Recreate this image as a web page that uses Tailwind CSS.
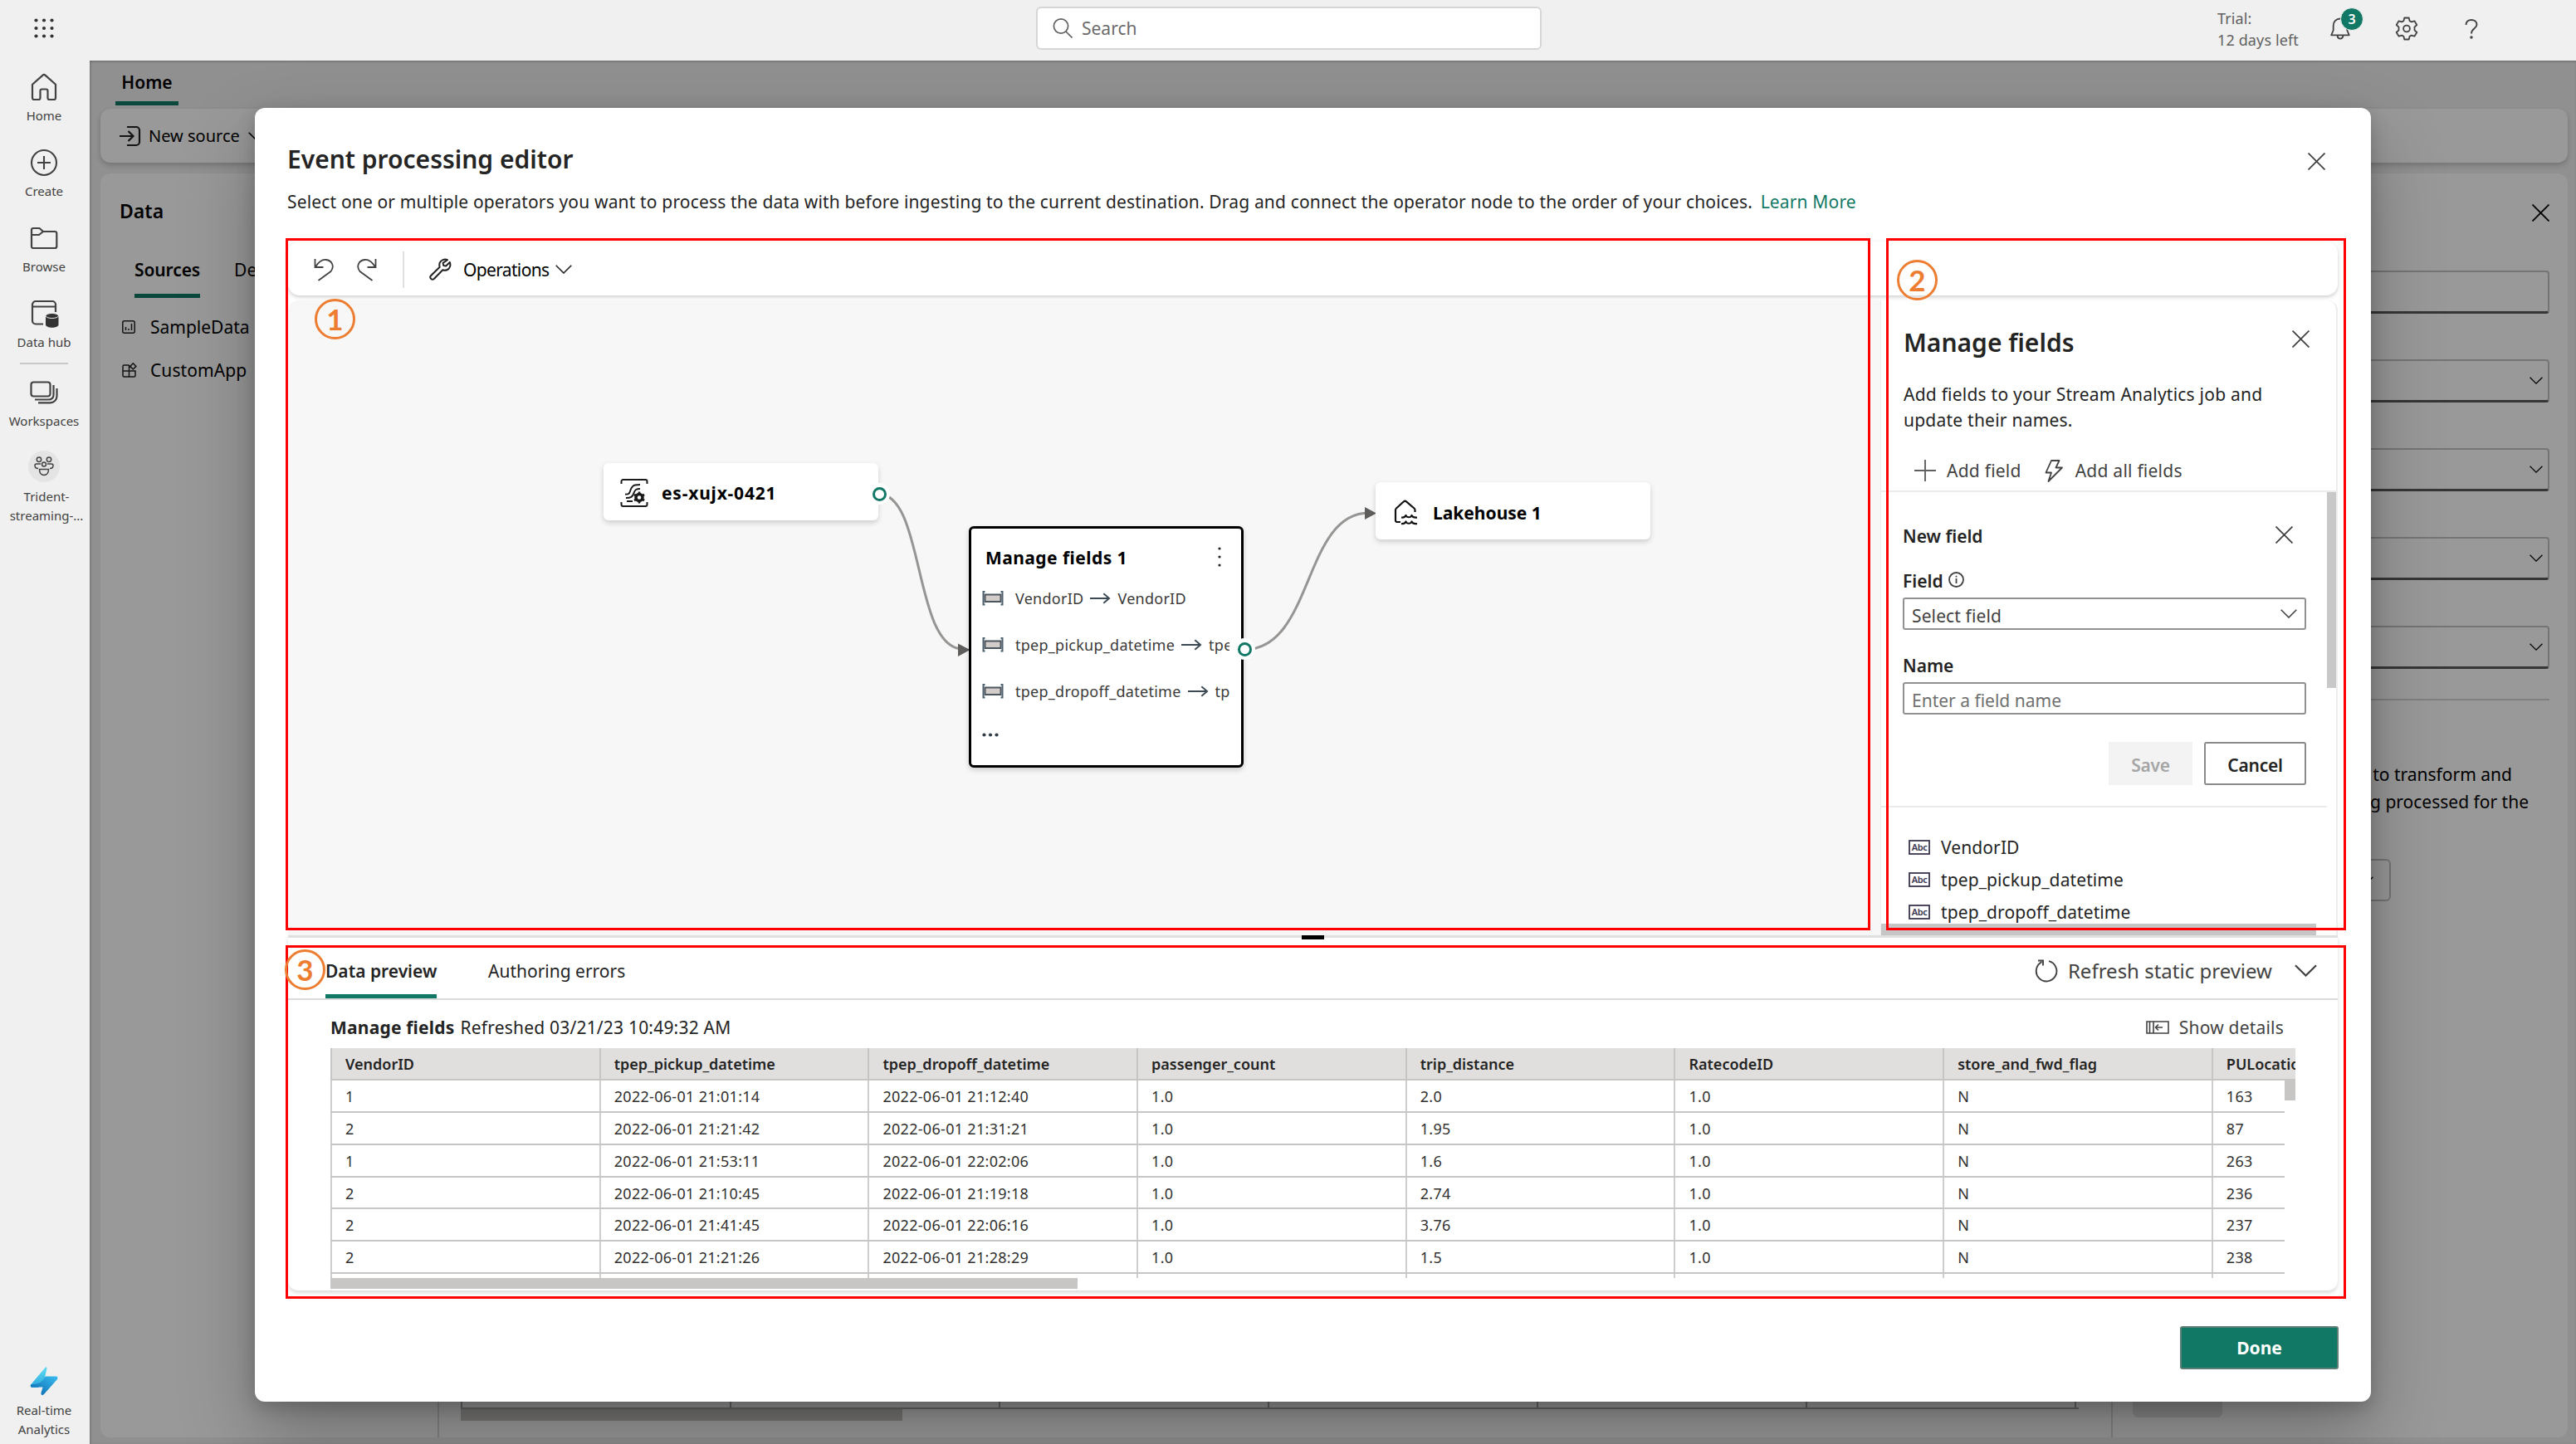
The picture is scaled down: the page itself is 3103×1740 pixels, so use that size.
<!DOCTYPE html>
<html lang="en">
<head>
    <meta charset="UTF-8">
    <meta name="viewport" content="width=device-width, initial-scale=1.0">
    <title>Event processing editor</title>
    <script src="https://cdn.jsdelivr.net/npm/@tailwindcss/browser@4"></script>
</head>
<body class="w-[3103px] h-[1740px] overflow-hidden flex flex-col bg-[#f0f0f0] font-['Noto_Sans','Open_Sans',sans-serif] text-[21px] leading-[30px] text-[#242424] whitespace-nowrap">
    <!-- Shared icons -->
    <svg class="hidden">
        <symbol id="x" viewBox="0 0 20 20"><path d="M.5.5l19 19M19.5.5l-19 19" fill="none" stroke="currentColor" stroke-width="1.7"/></symbol>
        <symbol id="chevron" viewBox="0 0 20 11"><path d="M.7.8L10 10 19.3.8" fill="none" stroke="currentColor" stroke-width="1.6"/></symbol>
        <symbol id="abc" viewBox="0 0 26 18"><rect x="1" y="1" width="24" height="16" fill="none" stroke="#3b3550" stroke-width="1.8"/><text x="13" y="13" text-anchor="middle" font-size="11" font-family="Noto Sans" font-weight="600" letter-spacing="-.4" fill="#3b3550">Abc</text></symbol>
        <symbol id="field" viewBox="0 0 26 18"><path d="M3.500 1H1.500v15.500h2M22.500 1h2v15.500h-2" fill="none" stroke="#4f6270" stroke-width="2"/><rect x="3.500" y="4.500" width="19" height="8.500" fill="#d2cdca" stroke="#4d565c" stroke-width="2"/></symbol>
        <symbol id="arrow" viewBox="0 0 26 14"><path d="M0 7h24M17 1l7 6-7 6" fill="none" stroke="#3b4a54" stroke-width="2"/></symbol>
    </svg>

    <!-- Top bar -->
    <header class="h-[73px] shrink-0 flex items-center relative">
        <svg class="ml-[41px] mb-[5px] w-6 h-6 fill-[#333]" viewBox="0 0 24 24">
            <circle cx="2.5" cy="2.5" r="2.1"/><circle cx="12" cy="2.5" r="2.1"/><circle cx="21.5" cy="2.5" r="2.1"/>
            <circle cx="2.5" cy="12" r="2.1"/><circle cx="12" cy="12" r="2.1"/><circle cx="21.5" cy="12" r="2.1"/>
            <circle cx="2.5" cy="21.5" r="2.1"/><circle cx="12" cy="21.5" r="2.1"/><circle cx="21.5" cy="21.5" r="2.1"/>
        </svg>
        <div class="ml-[1183px] mb-[5px] w-[609px] h-[52px] bg-white border-2 border-[#d6d6d6] rounded-md flex items-center pl-[18px] text-[#6b6b6b]">
            <svg class="w-6 h-6 mr-[11px]" viewBox="0 0 24 24" fill="none" stroke="#616161" stroke-width="1.7"><circle cx="10" cy="9.5" r="8.6"/><path d="M16 16l7.5 7.5"/></svg>
            Search
        </div>
        <div class="ml-[814px] mb-[3px] w-[120px] text-[18px] leading-[26px] tracking-[.13px] text-[#616161]">Trial:<br>12 days left</div>
        <div class="relative ml-[16px] mb-[5px] w-6 h-[27px]">
            <svg class="w-6 h-[27px]" viewBox="0 0 24 27" fill="none" stroke="#424242" stroke-width="1.8" stroke-linejoin="round"><path d="M12 1.500c-5 0-8.300 3.800-8.300 8.400v5.600L1.200 21.300h21.600l-2.500-5.800V9.900c0-4.600-3.300-8.400-8.300-8.400z"/><path d="M8.500 22c.4 2.300 1.700 3.600 3.500 3.600s3.100-1.300 3.500-3.600"/></svg>
            <div class="absolute left-[12px] -top-[12px] w-[28px] h-[28px] rounded-full bg-[#117865] border border-[#f0f0f0] text-white text-[16px] leading-[26px] font-semibold text-center">3</div>
        </div>
        <svg class="ml-[54px] mb-[4px] w-[28px] h-[29px]" viewBox="0 0 28 29" fill="none" stroke="#424242" stroke-width="1.8" stroke-linejoin="round"><path d="M11.300 1.500h5.400l.9 3.700 2.200 1.200 3.600-1.100 2.900 4.700-2.800 2.700v3.600l2.800 2.700-2.900 4.700-3.600-1.100-2.200 1.200-.9 3.700h-5.400l-.9-3.700-2.200-1.200-3.600 1.100-2.900-4.700 2.800-2.700v-3.600L1.700 10l2.900-4.700 3.600 1.100 2.200-1.200z"/><circle cx="14" cy="14.500" r="3.900"/></svg>
        <svg class="ml-[56px] mb-[4px] w-4 h-6" viewBox="0 0 16 24" fill="none" stroke="#424242" stroke-width="1.900"><path d="M1.500 7C1.500 3 4.200 1 8 1s6.500 2.200 6.500 5.700C14.500 11.500 8 11.300 8 17.500"/><circle cx="8" cy="22" r=".8"/></svg>
    </header>

    <div class="flex flex-1 min-h-0">
        <!-- Left navigation -->
        <nav class="w-[108px] shrink-0 flex flex-col items-center pr-[2px] text-[15px] leading-[23px] text-[#424242] text-center">
            <svg class="mt-[15px] w-8 h-[34px]" viewBox="0 0 32 34" fill="none" stroke="#424242" stroke-width="2.2" stroke-linejoin="round"><path d="M2 13.800L14.500 2.600a2.200 2.200 0 0 1 3 0L30 13.800V30a2 2 0 0 1-2 2h-5.500a2 2 0 0 1-2-2v-8.500a2 2 0 0 0-2-2h-5a2 2 0 0 0-2 2V30a2 2 0 0 1-2 2H4a2 2 0 0 1-2-2z"/></svg>
            <span class="mt-[6px]">Home</span>
            <svg class="mt-[28px] w-[34px] h-[34px]" viewBox="0 0 34 34" fill="none" stroke="#424242" stroke-width="2.100"><circle cx="17" cy="17" r="15"/><path d="M17 9v16M9 17h16"/></svg>
            <span class="mt-[6px]">Create</span>
            <svg class="mt-[31px] w-[34px] h-[28px]" viewBox="0 0 34 28" fill="none" stroke="#424242" stroke-width="2.200" stroke-linejoin="round"><path d="M2 4a2 2 0 0 1 2-2h7.500l4.500 4h14a2.300 2.300 0 0 1 2.300 2.300V24A2.300 2.300 0 0 1 30 26H4a2 2 0 0 1-2-2zM2 10h9l5-4"/></svg>
            <span class="mt-[9px]">Browse</span>
            <svg class="mt-[28px] ml-[3px] w-[35px] h-[35px]" viewBox="0 0 35 35" fill="none" stroke="#424242" stroke-width="2.200"><path d="M15 29.500H6a4 4 0 0 1-4-4V6a4 4 0 0 1 4-4h20a4 4 0 0 1 4 4v9M2 8.500h28"/><path d="M18 20v10c0 5 15.500 5 15.500 0V20z" fill="#333" stroke="none"/><ellipse cx="25.700" cy="19.500" rx="7.700" ry="3" fill="#333" stroke="#f0f0f0" stroke-width="1"/></svg>
            <span class="mt-[5px]">Data hub</span>
            <div class="mt-[13px] w-[58px] h-[2px] bg-[#c9c9c9]"></div>
            <svg class="mt-[20px] w-[34px] h-[28px]" viewBox="0 0 34 28" fill="none" stroke="#424242" stroke-width="2.200"><rect x="1.500" y="1.500" width="23" height="17" rx="3"/><path d="M6 22.500h17a5.500 5.500 0 0 0 5.500-5.500V5M10 26.300h14.500a8 8 0 0 0 8-8V9"/></svg>
            <span class="mt-[9px]">Workspaces</span>
            <div class="mt-[24px] w-[38px] h-[38px] rounded-full bg-[#e4e4e4] flex items-center justify-center">
                <svg class="w-6 h-6" viewBox="0 0 24 24" fill="none" stroke="#424242" stroke-width="1.500"><circle cx="6" cy="3.800" r="2.700"/><circle cx="18" cy="3.800" r="2.700"/><circle cx="12" cy="9.500" r="2.500"/><path d="M8 9H3a2 2 0 0 0-2 2c0 2 1.500 3.500 4 3.500M16 9h5a2 2 0 0 1 2 2c0 2-1.500 3.500-4 3.500M6.500 15.500h11c0 4-2 7-5.500 7s-5.500-3-5.500-7z"/></svg>
            </div>
            <span class="mt-[6px] ml-[6px]">Trident-<br>streaming-...</span>
            <svg class="mt-auto w-[34px] h-[40px]" viewBox="0 0 34 40">
                <defs>
                    <linearGradient id="b1" x1="0" y1="0" x2="0" y2="1"><stop offset="0" stop-color="#5fdcf2"/><stop offset="1" stop-color="#2aa5dd"/></linearGradient>
                    <linearGradient id="b2" x1="0" y1="1" x2="1" y2="0"><stop offset="0" stop-color="#0a63ad"/><stop offset="1" stop-color="#38bdf0"/></linearGradient>
                </defs>
                <path d="M18 3.500Q20 1 20.500 3.500L17 20 10 27H3c-2 0-3-2-1.500-4z" fill="url(#b1)"/>
                <path d="M19 13.500h12.500c2 0 2.500 2 1.500 3.500L17 35c-1.500 2-4 1-3.500-1.500l2-7H3c-2 0-3-2-1.500-3.500 4 .5 12-1 14-5z" fill="url(#b2)"/>
            </svg>
            <span class="mt-[3px] mb-[6px]">Real-time<br>Analytics</span>
        </nav>

        <main class="relative flex-1 flex flex-col text-black">
            <!-- Page behind the dialog -->
            <div class="h-[58px] pl-[31px]">
                <div class="w-[76px] pt-[11px] pb-[8px] border-b-[5px] border-[#117865] text-center font-semibold">Home</div>
            </div>
            <div class="ml-[13px] mr-[10px] h-[65px] bg-white rounded-xl shadow-[0_3px_6px_rgba(0,0,0,.2)] flex items-center pl-[23px] pt-[1px] text-[20px]">
                <svg class="w-[26px] h-[26px] mr-[9px]" viewBox="0 0 26 26" fill="none" stroke="#222" stroke-width="2.200"><path d="M0 13h16M10.500 7l6 6-6 6M9 2h11a4 4 0 0 1 4 4v14a4 4 0 0 1-4 4H9"/></svg>
                New source
                <svg class="w-5 h-[11px] ml-[10px]"><use href="#chevron"/></svg>
            </div>
            <div class="ml-[13px] mr-[10px] mt-[13px] h-[1523px] bg-white rounded-xl flex">
                <div class="w-[408px] border-r-2 border-[#dcdcdc] pl-[23px] pt-[30px]">
                    <div class="text-[23px] font-semibold">Data</div>
                    <div class="flex gap-[41px] pl-[18px] mt-[41px]">
                        <div class="border-b-[5px] border-[#117865] pb-[14px] font-semibold tracking-[-.1px]">Sources</div>
                        <div>Destinations</div>
                    </div>
                    <div class="flex items-center mt-[20px] pl-[3px]">
                        <svg class="w-4 h-4 mr-[18px]" viewBox="0 0 16 16" fill="none" stroke="#222" stroke-width="1.500"><rect x=".8" y=".8" width="14.400" height="14.400" rx="2"/><path d="M4.500 12V8M8 12v-2M11.500 12V4"/></svg>
                        SampleData
                    </div>
                    <div class="flex items-center mt-[22px] pl-[3px] tracking-[.1px]">
                        <svg class="w-[18px] h-[18px] mr-[16px]" viewBox="0 0 18 18" fill="none" stroke="#222" stroke-width="1.500"><path d="M8.500 3H2.500A1.500 1.500 0 0 0 1 4.500v11A1.500 1.500 0 0 0 2.500 17h12a1.500 1.500 0 0 0 1.500-1.500V10H1M8.500 3v14M13.300.8l3.600 3.600-3.600 3.600-3.600-3.600z"/></svg>
                        CustomApp
                    </div>
                </div>
                <div class="flex-1 pl-[26px] pt-[1479px]">
                    <div class="w-[1949px] h-[10px] border-b-2 border-l-2 border-[#aaa] grid grid-cols-[repeat(6,324px)]">
                        <span class="border-r-2 border-[#aaa]"></span><span class="border-r-2 border-[#aaa]"></span><span class="border-r-2 border-[#aaa]"></span><span class="border-r-2 border-[#aaa]"></span><span class="border-r-2 border-[#aaa]"></span><span class="border-r-2 border-[#aaa]"></span>
                    </div>
                    <div class="w-[532px] h-[14px] bg-[#c8c6c4]"></div>
                </div>
                <div class="w-[550px] border-l-2 border-[#dcdcdc] pl-[24px] pr-[22px] pt-[37px] flex flex-col">
                    <svg class="self-end w-[21px] h-[21px]"><use href="#x"/></svg>
                    <div class="mt-[59px] flex flex-col gap-[55.500px]">
                        <div class="h-[51.500px] border-2 border-b-[3px] border-[#c4c4c4] border-b-[#5a5a5a] rounded-sm"></div>
                        <div class="h-[51.500px] border-2 border-b-[3px] border-[#c4c4c4] border-b-[#5a5a5a] rounded-sm flex items-center justify-end pr-[6px]"><svg class="w-4 h-[9px]"><use href="#chevron"/></svg></div>
                        <div class="h-[51.500px] border-2 border-b-[3px] border-[#c4c4c4] border-b-[#5a5a5a] rounded-sm flex items-center justify-end pr-[6px]"><svg class="w-4 h-[9px]"><use href="#chevron"/></svg></div>
                        <div class="h-[51.500px] border-2 border-b-[3px] border-[#c4c4c4] border-b-[#5a5a5a] rounded-sm flex items-center justify-end pr-[6px]"><svg class="w-4 h-[9px]"><use href="#chevron"/></svg></div>
                        <div class="h-[51.500px] border-2 border-b-[3px] border-[#c4c4c4] border-b-[#5a5a5a] rounded-sm flex items-center justify-end pr-[6px]"><svg class="w-4 h-[9px]"><use href="#chevron"/></svg></div>
                    </div>
                    <div class="mt-[36px] h-[2px] bg-[#d6d6d6]"></div>
                    <div class="mt-[73px] leading-[33px]">
                        <div class="w-[457px] text-right">to transform and</div>
                        <div class="w-[477px] text-right">being processed for the</div>
                    </div>
                    <div class="mt-[52px] w-[311px] h-[51px] border-2 border-[#c4c4c4] rounded-md flex items-center justify-end pr-[19px]"><svg class="w-4 h-[9px]"><use href="#chevron"/></svg></div>
                    <div class="mt-[570px] w-[108px] h-[52px] rounded-md bg-[#e4e4e4] text-center text-[#bdbdbd] pt-[9px] font-semibold">Create</div>
                </div>
            </div>
            <div class="absolute inset-0 bg-black/40 shadow-[inset_0_2px_2px_rgba(0,0,0,.15),inset_2px_0_2px_rgba(0,0,0,.1)]"></div>

            <!-- Dialog -->
            <section class="absolute left-[199px] top-[57px] w-[2549px] h-[1559px] bg-white rounded-xl shadow-[0_40px_90px_rgba(0,0,0,.27),0_7px_22px_rgba(0,0,0,.2)] px-[40px] pt-[40px] flex flex-col text-[#242424]">
                <div class="flex justify-between pr-[15px]">
                    <h1 class="-ml-px text-[30px] leading-[44px] font-semibold">Event processing editor</h1>
                    <svg class="mt-[14px] w-[21px] h-[21px] text-[#424242]"><use href="#x"/></svg>
                </div>
                <p class="mt-[14px] -ml-px tracking-[.16px]">Select one or multiple operators you want to process the data with before ingesting to the current destination. Drag and connect the operator node to the order of your choices. <a class="ml-[4px] text-[#117865]">Learn More</a></p>

                <div class="relative z-10 mt-[33px] h-[65px] bg-white rounded-[14px] shadow-[0_2px_5px_rgba(0,0,0,.2)] flex items-center pl-[31px] pt-[2px]">
                    <svg class="w-[24px] h-[28px]" viewBox="0 0 24 28" fill="none" stroke="#424242" stroke-width="1.800"><path d="M1.500 1v10h10M2 10.500C6 4.500 10 1.500 14.500 2c8 .8 10.500 8.500 6 14L5.500 27"/></svg>
                    <svg class="ml-[28px] w-[24px] h-[28px]" viewBox="0 0 24 28" fill="none" stroke="#424242" stroke-width="1.800"><path d="M22.500 1v10h-10M22 10.500C18 4.500 14 1.500 9.500 2c-8 .8-10.500 8.500-6 14L18.500 27"/></svg>
                    <div class="ml-[31px] w-[2px] h-[44px] bg-[#e0e0e0]"></div>
                    <svg class="ml-[30px] w-[27px] h-[27px] mr-[14px]" viewBox="0 0 27 27" fill="none" stroke="#222" stroke-width="2" stroke-linejoin="round"><path d="M22 2.200c-3.500-1.500-8 0-9.300 3.500-.7 2-.5 3.500 0 5L2 21.200c-2.200 2.500 1.300 6 3.800 3.800L16.300 14.300c1.500.6 3.200.7 5 0 3.600-1.300 5-5.800 3.500-9.300l-4.600 4.500-3-.6-.6-3z"/></svg>
                    <span class="tracking-[-.65px] text-black">Operations</span>
                    <svg class="ml-[8px] w-5 h-[11px]"><use href="#chevron"/></svg>
                </div>

                <div class="mt-[6px] h-[765px] flex">
                    <!-- Canvas -->
                    <div class="relative w-[1919px] bg-[#f7f7f7] rounded-tl-xl">
                        <svg class="absolute inset-0 w-full h-full" fill="none" stroke="#979593" stroke-width="3">
                            <path d="M711 233C767 233 753 418 812 420"/>
                            <path d="M1151 421C1236 421 1222 256 1302 256"/>
                            <path d="M807 413.500l14.500 7.500-14.500 8zM1297 249l14 7.500-14 7.500z" fill="#605e5c" stroke="none"/>
                        </svg>
                        <div class="absolute left-[380px] top-[196px] w-[331px] h-[69px] bg-white rounded-md shadow-[0_3px_6px_rgba(0,0,0,.17)] flex items-center pl-[20px] pt-[3px] font-bold tracking-[.8px] text-black">
                            <svg class="w-[34px] h-[34px] mr-[16px]" viewBox="0 0 34 34" fill="none" stroke="#1b1b1b" stroke-width="2"><path d="M1.500 6V3a2 2 0 0 1 2-2h27a2 2 0 0 1 2 2v3M1.500 28v3a2 2 0 0 0 2 2h27a2 2 0 0 0 2-2v-3M6 18.500c7 1 5-4 8-8C16 7 19 7 24 7M7 23c6 0 8-1 9.500-6 1.500-4 3-5 7.500-5M8 27h7"/><circle cx="23" cy="22.500" r="4" stroke-width="3.500"/><path d="M23 15.500v3M23 26.500v3M17 19l2.600 1.500M26.500 24.500l2.600 1.500M17 26l2.600-1.500M26.500 20.500l2.600-1.500" stroke-width="2.600"/></svg>
                            es-xujx-0421
                        </div>
                        <div class="absolute left-[699px] top-[220px] w-[26px] h-[26px] rounded-full bg-white flex items-center justify-center"><span class="w-[17px] h-[17px] rounded-full border-[3.500px] border-[#117865]"></span></div>

                        <div class="absolute left-[820px] top-[272px] w-[331px] h-[291px] bg-white rounded-md border-[3px] border-black shadow-[0_3px_6px_rgba(0,0,0,.17)] pl-[13px] pr-[14px] pt-[20px] text-[18px] text-[#3b3a39]">
                            <div class="flex items-start justify-between pl-[4px] pr-[10px] text-[21px] font-bold tracking-[.44px] text-black">Manage fields 1
                                <svg class="mt-[2px] w-1 h-6 fill-[#222]" viewBox="0 0 4 24"><circle cx="2" cy="2" r="1.600"/><circle cx="2" cy="12" r="1.600"/><circle cx="2" cy="22" r="1.600"/></svg>
                            </div>
                            <div class="mt-[19px] flex items-center overflow-hidden tracking-[.26px]">
                                <svg class="shrink-0 w-[26px] h-[18px] mr-[14px]"><use href="#field"/></svg>VendorID<svg class="shrink-0 mx-[8px] w-[25px] h-[14px]"><use href="#arrow"/></svg>VendorID
                            </div>
                            <div class="mt-[26px] flex items-center overflow-hidden tracking-[.26px]">
                                <svg class="shrink-0 w-[26px] h-[18px] mr-[14px]"><use href="#field"/></svg>tpep_pickup_datetime<svg class="shrink-0 mx-[8px] w-[25px] h-[14px]"><use href="#arrow"/></svg>tpep_pickup_datetime
                            </div>
                            <div class="mt-[26px] flex items-center overflow-hidden tracking-[.26px]">
                                <svg class="shrink-0 w-[26px] h-[18px] mr-[14px]"><use href="#field"/></svg>tpep_dropoff_datetime<svg class="shrink-0 mx-[8px] w-[25px] h-[14px]"><use href="#arrow"/></svg>tpep_dropoff_datetime
                            </div>
                            <svg class="mt-[35px] w-5 h-[5px] fill-[#323f48]" viewBox="0 0 20 5"><circle cx="2.500" cy="2.500" r="2.100"/><circle cx="10" cy="2.500" r="2.100"/><circle cx="17.500" cy="2.500" r="2.100"/></svg>
                        </div>
                        <div class="absolute left-[1139px] top-[407px] w-[26px] h-[26px] rounded-full bg-white flex items-center justify-center"><span class="w-[17px] h-[17px] rounded-full border-[3.500px] border-[#117865]"></span></div>

                        <div class="absolute left-[1310px] top-[219px] w-[331px] h-[69px] bg-white rounded-md shadow-[0_3px_6px_rgba(0,0,0,.17)] flex items-center pl-[22px] pt-[4px] font-bold text-black">
                            <svg class="w-[30px] h-[31px] mr-[17px]" viewBox="0 0 30 31" fill="none" stroke="#111" stroke-width="2.200" stroke-linejoin="round"><path d="M8 27H4a2 2 0 0 1-2-2V12.500a3 3 0 0 1 1-2L12 2.300a2.400 2.400 0 0 1 3 0l9.500 8.200a3 3 0 0 1 1 2V15M9 21.500c3 .5 4.500-.5 5.500-2.500 1 3 6 3 7 0 1 2 3.500 3 6.500 2.500M9 29c3 .5 4.500-.5 5.500-2.500 1 3 6 3 7 0 1 2 3.500 3 6.500 2.500"/></svg>
                            Lakehouse 1
                        </div>
                    </div>

                    <!-- Manage fields panel -->
                    <div class="relative w-[551px] flex flex-col bg-white rounded-tr-xl border-l border-r-2 border-[#ededed]">
                        <div class="h-[229px] pl-[27px] pr-[32px] pt-[29px]">
                            <div class="flex justify-between">
                                <h2 class="text-[30px] leading-[44px] font-semibold">Manage fields</h2>
                                <svg class="mt-[7px] w-[21px] h-[21px] text-[#424242]"><use href="#x"/></svg>
                            </div>
                            <p class="mt-[25px] leading-[31px] tracking-[.23px]">Add fields to your Stream Analytics job and<br>update their names.</p>
                            <div class="mt-[30px] flex items-center pl-[13px] tracking-[.24px] text-[#424242]">
                                <svg class="w-[26px] h-[26px] mr-[13px]" viewBox="0 0 26 26" stroke="#616161" stroke-width="1.900"><path d="M13 0v26M0 13h26"/></svg>
                                Add field
                                <svg class="ml-[28px] w-[22px] h-[27px] mr-[15px]" viewBox="0 0 22 27" fill="none" stroke="#424242" stroke-width="1.800" stroke-linejoin="round"><path d="M8 1h9.500l-4 8.500H21L4.500 26 8 15.500H1.500z"/></svg>
                                Add all fields
                            </div>
                        </div>
                        <div class="flex border-t-2 border-[#ebebeb]">
                            <div class="flex-1">
                                <div class="pl-[26px] pr-[25px] h-[380px] border-b-2 border-[#ebebeb]">
                                    <div class="pt-[38px] flex justify-between items-start pr-[16px] font-semibold">New field <svg class="mt-[3px] w-[21px] h-[21px] text-[#424242]"><use href="#x"/></svg></div>
                                    <div class="mt-[24px] flex items-center gap-[6px] font-semibold">Field
                                        <svg class="mb-[4px] w-[19px] h-[19px]" viewBox="0 0 19 19" fill="none" stroke="#424242" stroke-width="1.800"><circle cx="9.500" cy="9.500" r="8.500"/><path d="M9.500 8v6M9.500 4.800v1.800"/></svg>
                                    </div>
                                    <div class="mt-[5px] w-[486px] h-[39px] border-2 border-[#919191] rounded-[3px] flex items-center justify-between pl-[9px] pr-[9px] pt-[4px] text-[#424242] tracking-[.12px]">Select field <svg class="mb-[5px] w-5 h-[11px]"><use href="#chevron"/></svg></div>
                                    <div class="mt-[28px] font-semibold">Name</div>
                                    <div class="mt-[5px] w-[486px] h-[39px] border-2 border-[#919191] rounded-[3px] flex items-center pl-[9px] pt-[4px] text-[#707070]">Enter a field name</div>
                                    <div class="mt-[33px] w-[486px] flex justify-end gap-[14px] font-semibold tracking-[-.25px]">
                                        <div class="w-[101px] h-[52px] bg-[#f3f3f3] text-[#a6a6a6] flex items-center justify-center pt-1">Save</div>
                                        <div class="w-[123px] h-[52px] border-2 border-[#8a8a8a] rounded-[3px] flex items-center justify-center pt-1">Cancel</div>
                                    </div>
                                </div>
                                <div class="pt-[33px] pl-[33px] h-[140px] flex flex-col gap-[9px] tracking-[.1px]">
                                    <div class="flex items-center gap-[13px]"><svg class="w-[26px] h-[18px]"><use href="#abc"/></svg>VendorID</div>
                                    <div class="flex items-center gap-[13px]"><svg class="w-[26px] h-[18px]"><use href="#abc"/></svg>tpep_pickup_datetime</div>
                                    <div class="flex items-center gap-[13px]"><svg class="w-[26px] h-[18px]"><use href="#abc"/></svg>tpep_dropoff_datetime</div>
                                </div>
                            </div>
                            <div class="w-[12px] h-[236px] bg-[#c8c8c8]"></div>
                        </div>
                        <div class="w-[524px] h-[14px] bg-[#c6c6c6]"></div>
                    </div>
                </div>

                <!-- Preview -->
                <div class="relative h-[428px] bg-white rounded-b-xl border-t-[3px] border-[#e0e0e0] shadow-[0_3px_5px_rgba(0,0,0,.15)]">
                    <div class="absolute left-[1221px] -top-[3px] w-[27px] h-[5px] bg-black"></div>
                    <div class="h-[75px] flex border-b-2 border-[#dcdcdc] pl-[45px] pr-[25px]">
                        <div class="w-[134px] pt-[25px] border-b-[5px] border-[#117865] font-semibold">Data preview</div>
                        <div class="ml-[62px] pt-[25px]">Authoring errors</div>
                        <div class="ml-auto flex items-center text-[24px] pt-[6px] text-[#424242]">
                            <svg class="w-[28px] h-[28px] mr-[12px]" viewBox="0 0 28 28" fill="none" stroke="#424242" stroke-width="1.900"><path d="M17 2.200a12.300 12.300 0 1 1-8.500 1M4 1.500h6v6"/></svg>
                            Refresh static preview
                            <svg class="ml-[27px] w-[27px] h-[15px]"><use href="#chevron"/></svg>
                        </div>
                    </div>
                    <div class="pl-[51px] pr-[65px] h-[58px] pt-[18px] flex items-start tracking-[.2px]">
                        <b class="mr-[7px]">Manage fields</b>Refreshed 03/21/23 10:49:32 AM
                        <div class="ml-auto flex items-center text-[#424242]">
                            <svg class="w-[28px] h-[16px] mr-[12px]" viewBox="0 1 28 16" fill="none" stroke="#424242" stroke-width="1.600"><path d="M1 2h26v14H1zM4.500 2v14M9 2v14M20 9h-8M15 5.500L11.500 9l3.500 3.500"/></svg>
                            Show details
                        </div>
                    </div>
                    <div id="preview" class="ml-[51px] w-[2367px] h-[277px] overflow-hidden relative text-[18px]"></div>
                    <div class="ml-[51px] w-[900px] h-[13px] bg-[#c8c6c4]"></div>
                </div>

                <button class="self-end -mr-px mt-[43px] w-[191px] h-[52px] bg-[#117865] border-2 border-[#5d7d76] rounded-[3px] text-white font-bold">Done</button>

                <!-- Callouts -->
                <div class="absolute z-20 left-[37px] top-[157px] w-[1909px] h-[834px] border-3 border-[#ff0000]"></div>
                <div class="absolute z-20 left-[1965px] top-[157px] w-[554px] h-[834px] border-3 border-[#ff0000]"></div>
                <div class="absolute z-20 left-[37px] top-[1009px] w-[2482px] h-[426px] border-3 border-[#ff0000]"></div>
                <div class="absolute z-20 left-[72px] top-[230px] w-[49px] h-[49px] rounded-full border-3 border-[#ed7d31] text-[#ed7d31] font-['Lato','Noto_Sans',sans-serif] font-bold text-[35px] leading-[43px] text-center">1</div>
                <div class="absolute z-20 left-[1978px] top-[183px] w-[49px] h-[49px] rounded-full border-3 border-[#ed7d31] text-[#ed7d31] font-['Lato','Noto_Sans',sans-serif] font-bold text-[35px] leading-[43px] text-center">2</div>
                <div class="absolute z-20 left-[36px] top-[1014px] w-[49px] h-[49px] rounded-full border-3 border-[#ed7d31] text-[#ed7d31] font-['Lato','Noto_Sans',sans-serif] font-bold text-[35px] leading-[43px] text-center">3</div>
            </section>
        </main>
    </div>

    <script>
        const columns = ["VendorID", "tpep_pickup_datetime", "tpep_dropoff_datetime", "passenger_count", "trip_distance", "RatecodeID", "store_and_fwd_flag", "PULocationID"];
        const rows = [
            ["1", "2022-06-01 21:01:14", "2022-06-01 21:12:40", "1.0", "2.0", "1.0", "N", "163"],
            ["2", "2022-06-01 21:21:42", "2022-06-01 21:31:21", "1.0", "1.95", "1.0", "N", "87"],
            ["1", "2022-06-01 21:53:11", "2022-06-01 22:02:06", "1.0", "1.6", "1.0", "N", "263"],
            ["2", "2022-06-01 21:10:45", "2022-06-01 21:19:18", "1.0", "2.74", "1.0", "N", "236"],
            ["2", "2022-06-01 21:41:45", "2022-06-01 22:06:16", "1.0", "3.76", "1.0", "N", "237"],
            ["2", "2022-06-01 21:21:26", "2022-06-01 21:28:29", "1.0", "1.5", "1.0", "N", "238"],
            ["", "", "", "", "", "", "", ""],
        ];

        const head = columns.map(c => `<div class="border-l-2 border-[#c8c6c4] pl-[16px]">${c}</div>`).join("");
        const body = rows.map(r => `
            <div class="w-[2354px] overflow-hidden h-[38.870px] border-b-2 border-[#c8c6c4] grid grid-cols-[repeat(8,323.700px)] leading-[38px] tracking-[.3px] text-[#323130]">
                ${r.map(c => `<div class="border-l-2 border-[#d0cecc] pl-[16px]">${c}</div>`).join("")}
            </div>`).join("");

        document.getElementById("preview").innerHTML = `
            <div class="h-[39px] bg-[#e1dfdd] border-b-2 border-[#c8c6c4] grid grid-cols-[repeat(8,323.700px)] leading-[38px] font-semibold">${head}</div>
            ${body}
            <div class="absolute right-0 top-[39px] w-[13px] h-[24px] bg-[#c8c6c4]"></div>`;
    </script>
</body>
</html>
